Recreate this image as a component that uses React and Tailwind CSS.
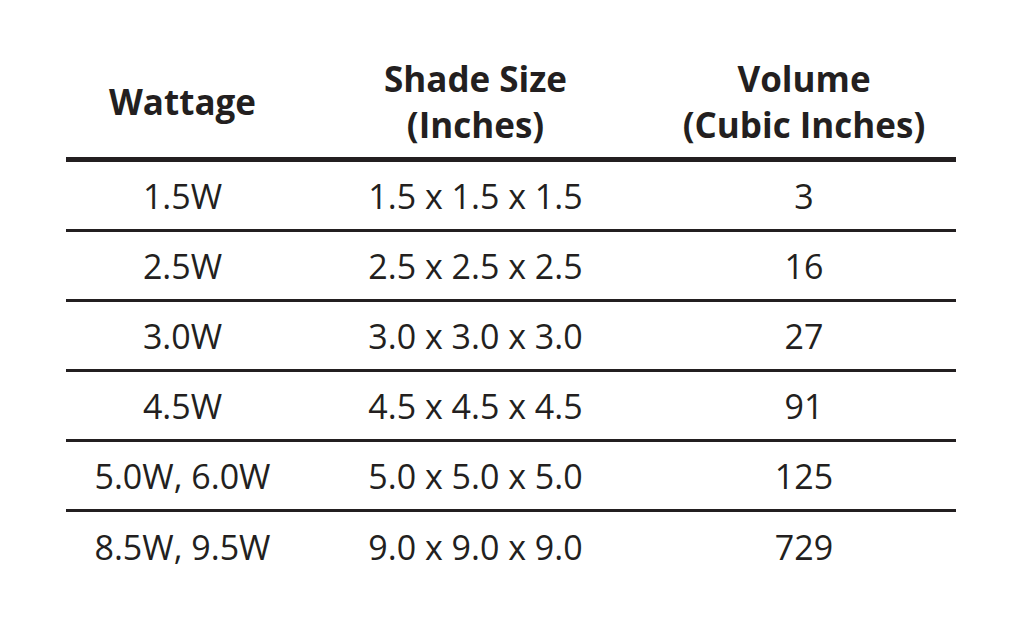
const rows = [
  ['1.5W', '1.5 x 1.5 x 1.5', '3'],
  ['2.5W', '2.5 x 2.5 x 2.5', '16'],
  ['3.0W', '3.0 x 3.0 x 3.0', '27'],
  ['4.5W', '4.5 x 4.5 x 4.5', '91'],
  ['5.0W, 6.0W', '5.0 x 5.0 x 5.0', '125'],
  ['8.5W, 9.5W', '9.0 x 9.0 x 9.0', '729'],
]

const App = () => {
  return (
    <div className="w-[1018px] h-[618px] bg-white text-[#231f20] font-['Open_Sans',sans-serif] pl-[66px] pr-[62px]">
      {/* header */}
      <div className="flex pt-[56px] pb-[9px] border-b-[5px] border-[#231f20] text-[35px] leading-[46px] font-bold text-center">
        <div className="w-[233px] flex items-center justify-center">Wattage</div>
        <div className="w-[353px] flex flex-col items-center justify-center">
          <span>Shade Size</span>
          <span>(Inches)</span>
        </div>
        <div className="flex-1 flex flex-col items-center justify-center">
          <span>Volume</span>
          <span>(Cubic Inches)</span>
        </div>
      </div>

      {/* rows */}
      {rows.map((r, i) => (
        <div
          key={r[0]}
          className={`flex h-[70px] items-center text-[34px] leading-[46px] text-center ${
            i < rows.length - 1 ? 'border-b-[3px] border-[#231f20]' : ''
          }`}
        >
          <div className="w-[233px]">{r[0]}</div>
          <div className="w-[353px]">{r[1]}</div>
          <div className="flex-1">{r[2]}</div>
        </div>
      ))}
    </div>
  )
}

export default App
